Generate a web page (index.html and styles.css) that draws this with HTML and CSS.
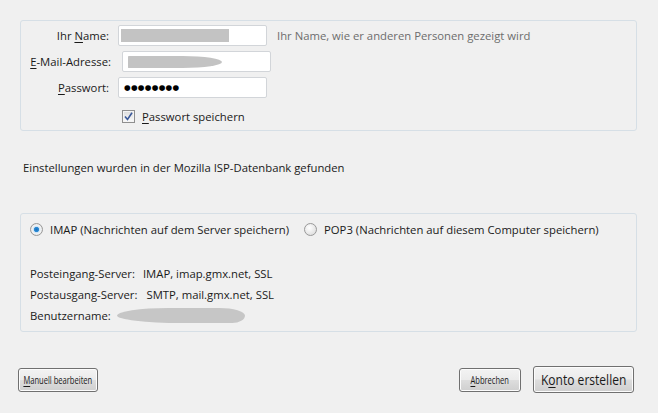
FILE: index.html
```html
<!DOCTYPE html>
<html lang="de">
<head>
<meta charset="utf-8">
<title>Konto einrichten</title>
<link rel="stylesheet" href="styles.css">
</head>
<body>
<div class="page">
  <div class="group group-account">
    <div class="form">
      <label class="lbl">Ihr <u>N</u>ame:</label>
      <div class="field"><span class="blur blur-name"></span></div>
      <span class="hint">Ihr Name, wie er anderen Personen gezeigt wird</span>

      <label class="lbl lbl-wide"><u>E</u>-Mail-Adresse:</label>
      <div class="field field-shift"><span class="blur blur-mail"></span></div>
      <span></span>

      <label class="lbl"><u>P</u>asswort:</label>
      <div class="field"><span class="dots">●●●●●●●●</span></div>
      <span></span>
    </div>
    <div class="check-row">
      <span class="checkbox">
        <svg width="9" height="9" viewBox="0 0 9 9"><path d="M1 4.5 L3.5 7.5 L8 0.8" fill="none" stroke="#3c5a9a" stroke-width="1.6"/></svg>
      </span>
      <span><u>P</u>asswort speichern</span>
    </div>
  </div>

  <p class="status">Einstellungen wurden in der Mozilla ISP-Datenbank gefunden</p>

  <div class="group group-server">
    <div class="radio-row">
      <span class="radio-item"><span class="radio radio-on"></span>IMAP (Nachrichten auf dem Server speichern)</span>
      <span class="radio-item"><span class="radio"></span>POP3 (Nachrichten auf diesem Computer speichern)</span>
    </div>
    <div class="info">
      <div class="info-line">Posteingang-Server:<span class="val">IMAP, imap.gmx.net, SSL</span></div>
      <div class="info-line">Postausgang-Server:<span class="val val-out">SMTP, mail.gmx.net, SSL</span></div>
      <div class="info-line">Benutzername:<span class="blur blur-user"></span></div>
    </div>
  </div>

  <div class="buttons">
    <button class="btn btn-small btn-manual"><span class="cap"><u>M</u>anuell bearbeiten</span></button>
    <div class="spacer"></div>
    <button class="btn btn-small btn-cancel"><span class="cap"><u>A</u>bbrechen</span></button>
    <button class="btn btn-big"><span class="cap">K<u>o</u>nto erstellen</span></button>
  </div>
</div>
</body>
</html>
```
FILE: styles.css
```css
html, body {
  margin: 0;
  padding: 0;
  background: #f0f0f0;
}
body {
  font-family: "Open Sans", "Noto Sans", "Liberation Sans", sans-serif;
  font-size: 11.3px;
  color: #1a1a1a;
  width: 658px;
  height: 413px;
  overflow: hidden;
}
u { text-decoration: underline; text-underline-offset: 2px; }
.page {
  padding: 20px 21px 0 20px;
}
.group {
  border: 1px solid #d6dfe6;
  border-radius: 3px;
  box-sizing: border-box;
}
.group-account {
  height: 111px;
  padding: 4px 0 0 0;
}
.form {
  display: grid;
  grid-template-columns: 88px 153px auto;
  column-gap: 9px;
  row-gap: 5px;
  align-items: center;
}
.lbl {
  text-align: right;
  white-space: nowrap;
}
.lbl-wide { margin-right: -2px; }
.field {
  width: 149px;
  height: 21px;
  box-sizing: border-box;
  border: 1px solid #d2d5d9;
  border-radius: 2px;
  background: #fff;
  display: flex;
  align-items: center;
  padding-left: 2px;
}
.field-shift { margin-left: 4px; }
.hint {
  color: #6d6d6d;
  margin-left: -3px;
}
.blur {
  display: inline-block;
  background: #c3c3c3;
}
.blur-name { width: 108px; height: 13px; }
.blur-mail { width: 94px; height: 12px; margin-left: 3px; border-radius: 1px 50% 50% 1px / 1px 60% 60% 1px; }
.dots {
  font-family: "DejaVu Sans", sans-serif;
  font-size: 7.6px;
  letter-spacing: 0.3px;
  color: #000;
  padding-left: 3px;
}
.check-row {
  display: flex;
  align-items: center;
  margin: 11px 0 0 101px;
  gap: 7px;
}
.checkbox {
  width: 13px;
  height: 13px;
  box-sizing: border-box;
  border: 1px solid #8f8f8f;
  background: linear-gradient(#dcdcdc, #fbfbfb);
  display: flex;
  align-items: center;
  justify-content: center;
  box-shadow: inset 0 0 0 1px #f4f4f4;
}
.status {
  margin: 29px 0 0 3px;
  line-height: 16px;
}
.group-server {
  margin-top: 37px;
  height: 119px;
  padding: 7px 9px 0 9px;
}
.radio-row {
  display: flex;
  gap: 15px;
  align-items: center;
  height: 16px;
}
.radio-item {
  display: flex;
  align-items: center;
  gap: 7px;
}
.radio {
  width: 13px;
  height: 13px;
  box-sizing: border-box;
  border-radius: 50%;
  border: 1px solid #999;
  background: radial-gradient(circle at 40% 35%, #fff, #d6d6d6);
  display: inline-block;
}
.radio-on {
  background: radial-gradient(circle, #1b6fbb 0, #2a8ad4 2.2px, #cfe4f5 3px, #f4f4f4 4.5px, #dedede 6px);
}
.info {
  margin-top: 26px;
}
.info-line {
  height: 21px;
  display: flex;
  align-items: center;
}
.val { margin-left: 8px; }
.val-out { margin-left: 9px; }
.blur-user {
  width: 128px;
  height: 15px;
  margin-left: 6px;
  border-radius: 40% 20% 10% 50% / 50% 50% 50% 50%;
  background: #c6c6c6;
}
.buttons {
  display: flex;
  align-items: center;
  margin-top: 34px;
  margin-left: -2px;
  padding-right: 3px;
}
.spacer { flex: 1; }
.btn {
  font-family: inherit;
  color: #1a1a1a;
  border: 1px solid #707070;
  border-radius: 3px;
  background: linear-gradient(#f3f3f3 0%, #ebebeb 48%, #dddddd 52%, #cfcfcf 100%);
  box-shadow: inset 0 0 0 1px #fcfcfc;
  padding: 0;
  box-sizing: border-box;
  display: flex;
  align-items: center;
  justify-content: center;
  white-space: nowrap;
}
.cap {
  display: inline-block;
  transform-origin: center;
}
.btn-small {
  font-size: 10.5px;
  height: 24px;
}
.btn-small .cap { transform: scaleX(0.72); }
.btn-manual { width: 80px; }
.btn-cancel {
  width: 62px;
  margin-right: 12px;
}
.btn-big {
  font-size: 14px;
  height: 27px;
  width: 101px;
}
.btn-big .cap { transform: scaleX(0.86); }
```
